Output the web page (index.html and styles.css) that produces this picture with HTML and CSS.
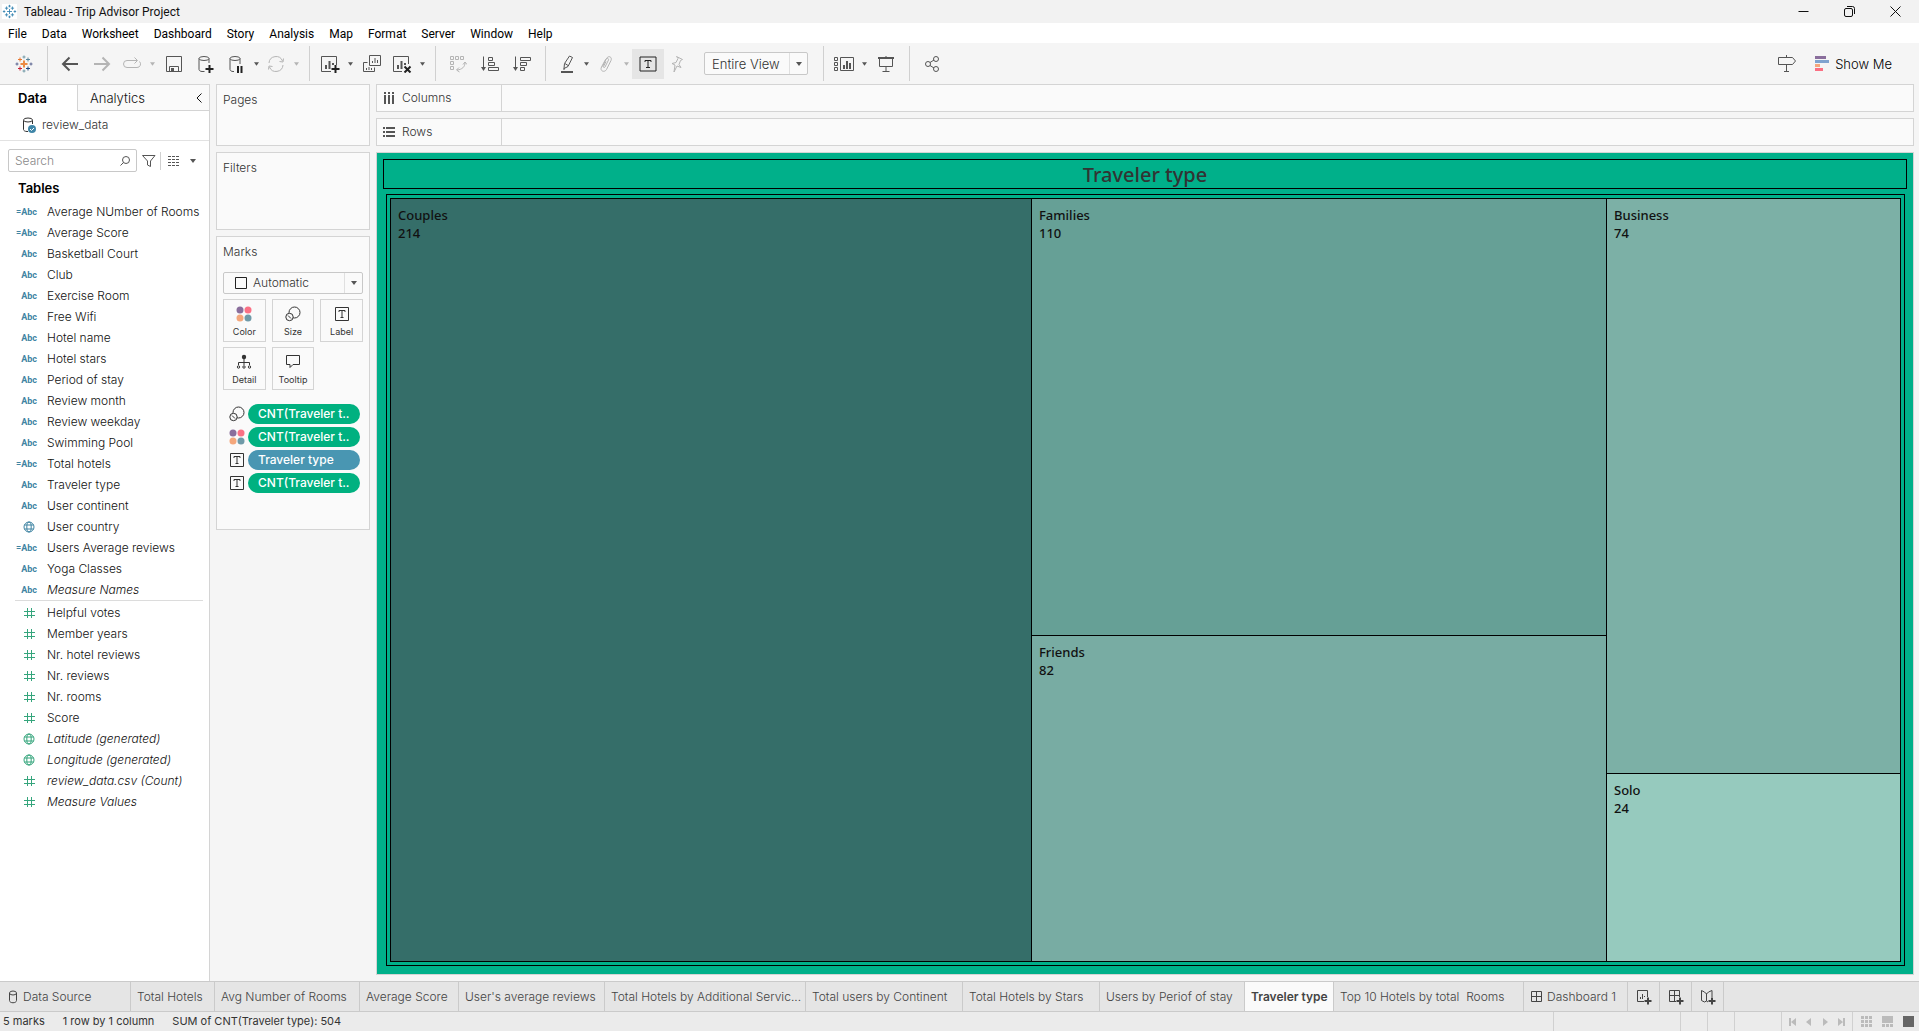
FILE: index.html
```html
<!DOCTYPE html>
<html lang="en">
<head>
<meta charset="utf-8">
<title>Tableau - Trip Advisor Project</title>
<link rel="stylesheet" href="styles.css">
</head>
<body>
<svg class="defs" aria-hidden="true">
  <symbol id="caret" viewBox="0 0 6 4"><path d="M0 0h6L3 4z"/></symbol>
  <symbol id="logo" viewBox="0 0 18 18">
    <path d="M9 5.500v7M5.500 9h7" class="l-orange"/>
    <path d="M5 2.500v4M3 4.500h4" class="l-red2"/>
    <path d="M13 2.500v4M11 4.500h4" class="l-teal"/>
    <path d="M5 11.500v4M3 13.500h4" class="l-red"/>
    <path d="M13 11.500v4M11 13.500h4" class="l-navy"/>
    <path d="M9 .5v3M7.500 2h3M9 14.500v3M7.500 16h3" class="l-blue"/>
    <path d="M2 7.500v3M.5 9h3M16 7.500v3M14.500 9h3" class="l-purple"/>
  </symbol>
  <symbol id="text-box" viewBox="0 0 16 16"><path d="M1.500 1.500h13v13h-13zM5 6V4.500h6V6M8 4.500v7M6.500 11.500h3"/></symbol>
  <symbol id="size" viewBox="0 0 16 16"><circle cx="9.500" cy="6.500" r="5.500"/><circle class="cover" cx="4.500" cy="11" r="3.700"/><path d="M3 9.500l3 3"/></symbol>
  <symbol id="dots" viewBox="0 0 16 16"><circle cx="4" cy="4" r="3.500" fill="#8a6e9c"/><circle cx="12" cy="4" r="3.500" fill="#fb7185"/><circle cx="4" cy="12" r="3.500" fill="#f4a77c"/><circle cx="12" cy="12" r="3.500" fill="#6f9aa8"/></symbol>
  <symbol id="globe" viewBox="0 0 12 12"><circle cx="6" cy="6" r="5"/><ellipse cx="6" cy="6" rx="2.200" ry="5"/><path d="M1.500 4h9M1.500 8h9"/></symbol>
  <symbol id="hash" viewBox="0 0 12 12"><path d="M4.500 1v10M8.500 1v10M1 4.500h11M1 8.500h11"/></symbol>
</svg>

<header class="titlebar">
  <svg class="app-icon" viewBox="0 0 18 18"><path d="M9 6v6M6 9h6M5.500 3v4M3.500 5h4M12.500 3v4M10.500 5h4M5.500 11v4M3.500 13h4M12.500 11v4M10.500 13h4M9 1v3M7.500 2.500h3M9 14v3M7.500 15.500h3M2.500 7.500v3M1 9h3M15.500 7.500v3M14 9h3"/></svg>
  <span class="app-title">Tableau - Trip Advisor Project</span>
  <div class="window-buttons">
    <button aria-label="Minimize"><svg viewBox="0 0 11 11"><path d="M.5 5.500h10"/></svg></button>
    <button aria-label="Restore"><svg viewBox="0 0 11 11"><rect x=".5" y="2.500" width="8" height="8" rx="1.500"/><path d="M3 .5h5.500a2 2 0 0 1 2 2V8"/></svg></button>
    <button aria-label="Close"><svg viewBox="0 0 11 11"><path d="M.5.5l10 10M10.500.5l-10 10"/></svg></button>
  </div>
</header>

<nav class="menubar">
  <button>File</button><button>Data</button><button>Worksheet</button><button>Dashboard</button><button>Story</button><button>Analysis</button><button>Map</button><button>Format</button><button>Server</button><button>Window</button><button>Help</button>
</nav>

<div class="toolbar">
  <div class="group">
    <button class="tool" aria-label="Start page"><svg class="logo" viewBox="0 0 18 18"><use href="#logo"/></svg></button>
  </div>
  <div class="group">
    <button class="tool" aria-label="Undo"><svg viewBox="0 0 18 18"><path class="bold" d="M1.500 9H17M8.500 2.500L2 9l6.500 6.500"/></svg></button>
    <button class="tool off" aria-label="Redo"><svg viewBox="0 0 18 18"><path class="bold" d="M1 9h15.500M9.500 2.500L16 9l-6.500 6.500"/></svg></button>
    <button class="tool split off" aria-label="Replay"><svg viewBox="0 0 18 18"><path d="M14 5.500H4a3.500 3.500 0 0 0 0 7h10a3.500 3.500 0 0 0 2.500-6M11.500 2.500l3 3-3 3"/></svg></button>
    <button class="arrow off" aria-label="Replay options"><svg class="caret"><use href="#caret"/></svg></button>
    <button class="tool" aria-label="Save"><svg viewBox="0 0 18 18"><path d="M1.500 1.500h15v15h-15zM4.500 16V11.500h9V16"/><path class="solid" d="M6 13h3v3.500H6z"/></svg></button>
    <button class="tool" aria-label="New data source"><svg viewBox="0 0 18 18"><path d="M7.500 16.500H5c-1.500 0-3-1-3-2v-11M12 8V3.500"/><ellipse cx="7" cy="3.500" rx="5" ry="2"/><path class="badge" d="M12.500 10v8M8.500 14h8"/></svg></button>
    <button class="tool split" aria-label="Pause updates"><svg viewBox="0 0 18 18"><path d="M7 16.500H6c-1.500 0-3-1-3-2v-11M13 9V3.500"/><ellipse cx="8" cy="3.500" rx="5" ry="2"/><path class="badge" d="M11 11v7M14.500 11v7"/></svg></button>
    <button class="arrow" aria-label="Pause options"><svg class="caret"><use href="#caret"/></svg></button>
    <button class="tool split off" aria-label="Refresh"><svg viewBox="0 0 18 18"><path d="M2 8a7 7 0 0 1 13.500-2M16 10a7 7 0 0 1-13.500 2M12.500 6.500l3.500.5.5-3.500M5.500 11.500L2 11l-.5 3.500"/></svg></button>
    <button class="arrow off" aria-label="Refresh options"><svg class="caret"><use href="#caret"/></svg></button>
  </div>
  <div class="group">
    <button class="tool split" aria-label="New worksheet"><svg class="wide" viewBox="0 0 20 18"><path d="M11 16.500H1.500v-15h15V10"/><path class="thick" d="M6 14v-4M9.500 14V6M13 10V8"/><path class="badge" d="M15.500 10v8M11.500 14h8"/></svg></button>
    <button class="arrow" aria-label="New sheet options"><svg class="caret"><use href="#caret"/></svg></button>
    <button class="tool" aria-label="Duplicate"><svg viewBox="0 0 18 18"><path d="M6.500.5h11v10h-11zM4.500 7.500h-4v9h11v-4M9.500 8V6M12 8V3M14.500 8V5M3.500 15v-2M6 15v-3M8.500 15v-2"/></svg></button>
    <button class="tool split" aria-label="Clear sheet"><svg class="wide" viewBox="0 0 20 18"><path d="M10 16.500H1.500v-15h15V9"/><path class="thick" d="M6 14v-4M9.500 14V6M13 10V8"/><path class="badge" d="M12.500 11.500l6 6M18.500 11.500l-6 6"/></svg></button>
    <button class="arrow" aria-label="Clear options"><svg class="caret"><use href="#caret"/></svg></button>
  </div>
  <div class="group">
    <button class="tool off" aria-label="Swap rows and columns"><svg viewBox="0 0 18 18"><path d="M1.500 1.500h3v3h-3zM6.500 1.500h3v3h-3zM11.500 1.500h3v3h-3zM1.500 6.500h3v3h-3zM1.500 11.500h3v3h-3zM16 7.500c0 4.500-3 7-8 7.500M14 9.500l2-2.500 2 2.500M10 12.500L7.500 15l3 2"/></svg></button>
    <button class="tool" aria-label="Sort ascending"><svg viewBox="0 0 18 18"><path d="M2.500 1.500v13M7.500 2.500h4v3h-4zM7.500 7.500h6v3h-6zM7.500 12.500h10v3h-10z"/><path class="solid" d="M0 12h5l-2.500 4z"/></svg></button>
    <button class="tool" aria-label="Sort descending"><svg viewBox="0 0 18 18"><path d="M2.500 1.500v13M7.500 2.500h10v3h-10zM7.500 7.500h6v3h-6zM7.500 12.500h4v3h-4z"/><path class="solid" d="M0 12h5l-2.500 4z"/></svg></button>
  </div>
  <div class="group">
    <button class="tool split" aria-label="Highlight"><svg viewBox="0 0 18 18"><path d="M12.500 1l3 1.500-4.500 9-4 2 .5-5zM8 8.500l3 2M6 14h2"/><path class="thick" d="M4 17h12"/></svg></button>
    <button class="arrow" aria-label="Highlight options"><svg class="caret"><use href="#caret"/></svg></button>
    <button class="tool split off" aria-label="Group members"><svg viewBox="0 0 18 18"><path d="M5.500 11.500l4-8c2-3.500 6-1.500 4.500 2l-4.500 9c-2 3.500-7 1.500-5-2.500l4-7.500c1.500-2 3.500-1 3 .5l-3.500 7c-.5 1-2 .5-1.500-.5l2.500-5"/></svg></button>
    <button class="arrow off" aria-label="Group options"><svg class="caret"><use href="#caret"/></svg></button>
    <button class="tool pressed" aria-label="Show mark labels" aria-pressed="true"><svg viewBox="0 0 18 18"><path d="M1 2h16v14H1zM6 7V5.500h6V7M9 5.500v7M7 12.500h4"/></svg></button>
    <button class="tool split off" aria-label="Fix axes"><svg viewBox="0 0 18 18"><path d="M7.500 1.500l6 3-2 1-1.500 4 2 3-4-1.500-3 6 1-7-3-1.500 4-1 2-4z"/></svg></button>
    <div class="picker fit">
      <select aria-label="Fit"><option>Entire View</option></select>
      <span class="picker-arrow"><svg class="caret"><use href="#caret"/></svg></span>
    </div>
  </div>
  <div class="group">
    <button class="tool split" aria-label="Show cards"><svg class="wide" viewBox="0 0 20 18"><path d="M.5 2.500h3v3h-3zM.5 7.500h3v3h-3zM.5 12.500h3v3h-3zM6.500 2.500h13v13h-13z"/><path class="thick" d="M10 14v-4M13 14V6M16 14V8"/></svg></button>
    <button class="arrow" aria-label="Card options"><svg class="caret"><use href="#caret"/></svg></button>
    <button class="tool" aria-label="Presentation mode"><svg viewBox="0 0 18 18"><path class="thick" d="M1 3h16"/><path d="M2.500 3v8.500h13V3M9 1v2M9 11.500v5M5.500 16.500h7"/></svg></button>
  </div>
  <div class="group last">
    <button class="tool" aria-label="Share"><svg viewBox="0 0 18 18"><circle cx="5" cy="9" r="2.500"/><circle cx="13" cy="4" r="2.500"/><circle cx="13" cy="14" r="2.500"/><path d="M7 7.500l4-2.500M7 10.500l4 2.500"/></svg></button>
  </div>
  <div class="right-tools">
    <button class="tool" aria-label="Guide"><svg viewBox="0 0 18 18"><path d="M.5 2.500h14l3 3.500-3 3.500H.5zM8.500 0v2.500M8.500 9.500v7M6 16.500h5"/></svg></button>
    <button class="show-me"><svg viewBox="0 0 14 16"><path fill="#8a6e9c" d="M0 0h11v3H0z"/><path fill="#7fa3cf" d="M0 4h14v3H0z"/><path fill="#f4a77c" d="M0 8h5v3H0z"/><path fill="#fb6f82" d="M0 12h8v3H0z"/></svg>Show Me</button>
  </div>
</div>

<div class="workspace">
  <aside class="data-pane">
    <div class="pane-tabs">
      <button class="pane-tab current">Data</button>
      <button class="pane-tab">Analytics<svg viewBox="0 0 6 10"><path d="M5.500.5L1 5l4.500 4.500"/></svg></button>
    </div>
    <div class="source"><svg viewBox="0 0 14 16"><path d="M6 14.500H5c-2 0-3.500-1-3.500-2v-9M10.500 7V3.500"/><ellipse cx="6" cy="3" rx="4.500" ry="2"/><circle cx="10" cy="12" r="4" fill="#3f86a8" stroke="none"/><path d="M8 12l1.500 1.500L12 11" stroke="#fff"/></svg>review_data</div>
    <div class="search-row">
      <div class="search"><input type="text" placeholder="Search" aria-label="Search"><svg viewBox="0 0 10 10"><circle cx="6" cy="4" r="3.500"/><path d="M3.500 6.500L.5 9.500"/></svg></div>
      <button class="filter" aria-label="Filter fields"><svg viewBox="0 0 14 14"><path d="M.5 1.500h12.500L8.500 7v5.500l-3-1.500V7z"/></svg></button>
      <button class="view-as" aria-label="View as"><svg viewBox="0 0 12 10"><path class="dash" d="M0 .5h12M0 3.500h12M0 6.500h12M0 9.500h12"/></svg><svg class="caret"><use href="#caret"/></svg></button>
    </div>
    <h2>Tables</h2>
    <ul class="fields dims">
      <li><span class="abc">=Abc</span>Average NUmber of Rooms</li>
      <li><span class="abc">=Abc</span>Average Score</li>
      <li><span class="abc">Abc</span>Basketball Court</li>
      <li><span class="abc">Abc</span>Club</li>
      <li><span class="abc">Abc</span>Exercise Room</li>
      <li><span class="abc">Abc</span>Free Wifi</li>
      <li><span class="abc">Abc</span>Hotel name</li>
      <li><span class="abc">Abc</span>Hotel stars</li>
      <li><span class="abc">Abc</span>Period of stay</li>
      <li><span class="abc">Abc</span>Review month</li>
      <li><span class="abc">Abc</span>Review weekday</li>
      <li><span class="abc">Abc</span>Swimming Pool</li>
      <li><span class="abc">=Abc</span>Total hotels</li>
      <li><span class="abc">Abc</span>Traveler type</li>
      <li><span class="abc">Abc</span>User continent</li>
      <li><svg viewBox="0 0 12 12"><use href="#globe"/></svg>User country</li>
      <li><span class="abc">=Abc</span>Users Average reviews</li>
      <li><span class="abc">Abc</span>Yoga Classes</li>
      <li><span class="abc">Abc</span><em>Measure Names</em></li>
    </ul>
    <ul class="fields measures">
      <li><svg viewBox="0 0 12 12"><use href="#hash"/></svg>Helpful votes</li>
      <li><svg viewBox="0 0 12 12"><use href="#hash"/></svg>Member years</li>
      <li><svg viewBox="0 0 12 12"><use href="#hash"/></svg>Nr. hotel reviews</li>
      <li><svg viewBox="0 0 12 12"><use href="#hash"/></svg>Nr. reviews</li>
      <li><svg viewBox="0 0 12 12"><use href="#hash"/></svg>Nr. rooms</li>
      <li><svg viewBox="0 0 12 12"><use href="#hash"/></svg>Score</li>
      <li><svg viewBox="0 0 12 12"><use href="#globe"/></svg><em>Latitude (generated)</em></li>
      <li><svg viewBox="0 0 12 12"><use href="#globe"/></svg><em>Longitude (generated)</em></li>
      <li><svg viewBox="0 0 12 12"><use href="#hash"/></svg><em>review_data.csv (Count)</em></li>
      <li><svg viewBox="0 0 12 12"><use href="#hash"/></svg><em>Measure Values</em></li>
    </ul>
  </aside>

  <section class="cards">
    <div class="card pages"><h3>Pages</h3></div>
    <div class="card filters"><h3>Filters</h3></div>
    <div class="card marks">
      <h3>Marks</h3>
      <div class="picker mark-type">
        <svg class="square" viewBox="0 0 12 12"><path d="M.5.5h11v11H.5z"/></svg>
        <select aria-label="Mark type"><option>Automatic</option></select>
        <span class="picker-arrow"><svg class="caret"><use href="#caret"/></svg></span>
      </div>
      <div class="mark-buttons">
        <button><svg viewBox="0 0 16 16"><use href="#dots"/></svg>Color</button>
        <button><svg viewBox="0 0 16 16"><use href="#size"/></svg>Size</button>
        <button><svg viewBox="0 0 16 16"><use href="#text-box"/></svg>Label</button>
        <button><svg viewBox="0 0 16 16"><circle cx="8" cy="3" r="2.200" class="ink"/><path d="M8 4v7M2.500 11V8.500h11V11"/><circle cx="2.500" cy="13" r="1.200"/><circle cx="8" cy="13" r="1.200"/><circle cx="13.500" cy="13" r="1.200"/></svg>Detail</button>
        <button><svg viewBox="0 0 16 16"><path d="M1.500 1.500h13v9H8l-3 3v-3H1.500z"/></svg>Tooltip</button>
      </div>
      <ul class="pills">
        <li><svg viewBox="0 0 16 16"><use href="#size"/></svg><button class="pill">CNT(Traveler t..</button></li>
        <li><svg viewBox="0 0 16 16"><use href="#dots"/></svg><button class="pill">CNT(Traveler t..</button></li>
        <li><svg viewBox="0 0 16 16"><use href="#text-box"/></svg><button class="pill blue">Traveler type</button></li>
        <li><svg viewBox="0 0 16 16"><use href="#text-box"/></svg><button class="pill">CNT(Traveler t..</button></li>
      </ul>
    </div>
  </section>

  <main>
    <div class="shelf"><span class="shelf-name"><svg viewBox="0 0 12 12"><path d="M2 0v2M2 3v9M6 0v2M6 3v9M10 0v2M10 3v9"/></svg>Columns</span></div>
    <div class="shelf"><span class="shelf-name"><svg viewBox="0 0 12 12"><path d="M0 2h2M3 2h9M0 6h2M3 6h9M0 10h2M3 10h9"/></svg>Rows</span></div>
    <div class="viz">
      <h1>Traveler type</h1>
      <div class="frame">
        <div class="treemap">
          <div class="cell couples">Couples<br>214</div>
          <div class="cell families">Families<br>110</div>
          <div class="cell friends">Friends<br>82</div>
          <div class="cell business">Business<br>74</div>
          <div class="cell solo">Solo<br>24</div>
        </div>
      </div>
    </div>
  </main>
</div>

<nav class="sheets">
  <button><svg viewBox="0 0 14 14"><path d="M3.500 3v7.500c0 3 7 3 7 0V3"/><ellipse cx="7" cy="3" rx="3.500" ry="2"/></svg>Data Source</button>
  <button>Total Hotels</button>
  <button>Avg Number of Rooms</button>
  <button>Average Score</button>
  <button>User's average reviews</button>
  <button>Total Hotels by Additional Servic...</button>
  <button>Total users by Continent</button>
  <button>Total Hotels by Stars</button>
  <button>Users by Periof of stay</button>
  <button class="current">Traveler type</button>
  <button>Top 10 Hotels by total&nbsp; Rooms</button>
  <button><svg viewBox="0 0 14 14"><path d="M1.500 1.500h10v10h-10zM6.500 1.500v10M1.500 6.500h10"/></svg>Dashboard 1</button>
  <button class="add" aria-label="New worksheet"><svg viewBox="0 0 16 16"><path d="M8 12.500H1.500v-11h10V8M4.500 10V8M6.500 10V5M8.500 8V7"/><path class="thick" d="M12 8.500v7M8.500 12h7"/></svg></button>
  <button class="add" aria-label="New dashboard"><svg viewBox="0 0 16 16"><path d="M8 12.500H1.500v-11h10V8M6.500 1.500v11M1.500 6.500h10"/><path class="thick" d="M12 8.500v7M8.500 12h7"/></svg></button>
  <button class="add" aria-label="New story"><svg viewBox="0 0 16 16"><path d="M8 13l-1.500-1-2 1-3-1.500v-10l3 1.500 2 2 2-2 3.500-1.500V8M6.500 4.500V12"/><path class="thick" d="M12 8.500v7M8.500 12h7"/></svg></button>
</nav>

<footer>
  <span>5 marks</span><span>1 row by 1 column</span><span>SUM of CNT(Traveler type): 504</span>
  <div class="slots">
    <i></i><i></i><i></i><i></i>
    <div class="pager">
      <button aria-label="First"><svg viewBox="0 0 8 8"><path d="M0 0h2v8H0zM7 0v8L2 4z"/></svg></button>
      <button aria-label="Previous"><svg viewBox="0 0 8 8"><path d="M6 0v8L1 4z"/></svg></button>
      <button aria-label="Next"><svg viewBox="0 0 8 8"><path d="M2 0v8l5-4z"/></svg></button>
      <button aria-label="Last"><svg viewBox="0 0 8 8"><path d="M6 0h2v8H6zM1 0v8l5-4z"/></svg></button>
    </div>
    <div class="views">
      <button aria-label="Sheet sorter"><svg viewBox="0 0 12 12"><path d="M0 0h3v3H0zM4 0h3v3H4zM8 0h3v3H8zM0 4h3v3H0zM4 4h3v3H4zM8 4h3v3H8zM0 8h3v3H0zM4 8h3v3H4zM8 8h3v3H8z"/></svg></button>
      <button aria-label="Filmstrip"><svg viewBox="0 0 12 12"><path d="M0 0h11v7H0zM0 8h3v3H0zM4 8h3v3H4zM8 8h3v3H8z"/></svg></button>
      <button class="current" aria-label="Tabs"><svg viewBox="0 0 12 12"><path d="M0 0h11v11H0z"/></svg></button>
    </div>
  </div>
</footer>
</body>
</html>
```
FILE: styles.css
```css
* { box-sizing: border-box; }

:root {
  --line: #d4d4d4;
  --panel: #fafafa;
  --ink: #111;
  --muted: #333;
  --icon: #555;
}

body {
  margin: 0;
  min-height: 100vh;
  display: flex;
  flex-direction: column;
  background: #f5f5f5;
  color: var(--ink);
  font: 300 12px/20px Inter, "Liberation Sans", sans-serif;
}

h1, h2, h3, ul { margin: 0; padding: 0; }
ul { list-style: none; }
button, select, input { font: inherit; color: inherit; border: 0; padding: 0; background: none; }
svg { fill: none; stroke: currentColor; flex: none; display: block; }
.defs { position: absolute; width: 0; height: 0; }
.caret { width: 6px; height: 4px; fill: currentColor; stroke: none; }
.thick { stroke-width: 2; }
.solid, .ink { fill: currentColor; stroke: none; }

/* title bar */
.titlebar { display: flex; align-items: center; height: 23px; background: #f2f2f2; color: #111; font-family: Roboto, sans-serif; font-weight: 400; }
.app-icon { width: 15px; height: 15px; margin: 0 7px 0 2px; background: #fff; color: #2f7fae; }
.window-buttons { display: flex; margin-left: auto; padding-right: 1px; }
.window-buttons button { width: 46px; height: 20px; display: grid; place-items: center; }
.window-buttons svg { width: 11px; height: 11px; }

/* menu */
.menubar { display: flex; align-items: center; gap: 15px; height: 20px; padding: 2px 0 0 8px; background: #fff; color: #000; font-family: Roboto, sans-serif; font-weight: 400; }

/* toolbar */
.toolbar { display: flex; height: 41px; padding: 3px 8px; color: var(--icon); }
.group { display: flex; align-items: center; padding: 0 7px 0 6px; border-right: 1px solid #d0d0d0; }
.group:first-child { padding-left: 0; }
.group.last { border: 0; }
.tool { width: 32px; height: 30px; display: grid; place-items: center; }
.tool.split { width: 28px; }
.tool svg { width: 18px; height: 18px; }
.tool .wide { width: 20px; }
.arrow { width: 12px; height: 30px; display: grid; place-items: center; }
.arrow .caret { width: 5px; }
.off { color: #b4b4b4; }
.bold { stroke-width: 2; }
.badge { stroke: #222; stroke-width: 2; }
.pressed { background: #e5e5e5; color: #222; }
.l-orange { stroke: #eb8a44; stroke-width: 2; }
.l-red { stroke: #c72035; }
.l-red2 { stroke: #e8762d; }
.l-teal { stroke: #5b879b; }
.l-navy { stroke: #1f457e; }
.l-blue { stroke: #7199a6; }
.l-purple { stroke: #5b6591; }
.picker { position: relative; display: flex; align-items: center; border: 1px solid #c8c8c8; border-radius: 2px; color: var(--muted); background: var(--panel); }
.picker select { appearance: none; flex: 1; min-width: 0; height: 100%; }
.picker-arrow { position: absolute; right: 0; top: 0; bottom: 0; width: 18px; border-left: 1px solid #e0e0e0; color: var(--icon); display: grid; place-items: center; pointer-events: none; }
.fit { width: 104px; height: 23px; margin: 0 8px 0 12px; font-size: 13px; }
.fit select { padding-left: 7px; }
.right-tools { display: flex; align-items: center; margin-left: auto; padding-right: 19px; gap: 12px; }
.show-me { display: flex; align-items: center; gap: 6px; font-size: 13px; color: #000; }
.show-me svg { width: 14px; height: 16px; stroke: none; }

/* workspace */
.workspace { flex: 1; display: flex; gap: 6px; padding-right: 5px; }
.data-pane { width: 210px; background: #fff; border-right: 1px solid var(--line); }
.pane-tabs { display: flex; height: 27px; font-size: 13px; }
.pane-tab { flex: 1; display: flex; align-items: center; justify-content: space-between; padding: 0 7px 0 12px; border: 1px solid var(--line); border-width: 1px 0 1px 1px; background: var(--panel); }
.pane-tab svg { width: 6px; height: 10px; }
.pane-tab.current { flex: none; width: 77px; padding-left: 18px; border-width: 1px 0 0; background: #fff; color: #000; font-weight: 600; }
.source { display: flex; align-items: center; gap: 6px; height: 30px; padding: 0 0 2px 22px; border-bottom: 1px solid #e2e2e2; color: var(--muted); }
.source svg { width: 14px; height: 16px; }
.search-row { display: flex; align-items: center; height: 23px; margin: 8px 0 6px 8px; color: var(--icon); }
.search { display: flex; align-items: center; width: 129px; height: 23px; padding: 0 6px; border: 1px solid #c8c8c8; border-radius: 2px; }
.search input { flex: 1; min-width: 0; }
.search input::placeholder { color: #888; }
.search svg { width: 10px; height: 10px; }
.filter { width: 24px; padding-left: 5px; border-right: 1px solid #d0d0d0; height: 18px; }
.filter svg { width: 14px; height: 14px; }
.view-as { display: flex; align-items: center; gap: 10px; padding-left: 7px; }
.view-as svg:first-child { width: 12px; height: 10px; }
.dash { stroke-dasharray: 3 1; }
h2 { padding: 0 0 3px 18px; font-size: 13px; line-height: 20px; font-weight: 600; color: #000; }
.fields li { display: flex; align-items: center; height: 21px; padding-right: 4px; white-space: nowrap; }
.fields svg { width: 12px; height: 12px; margin: 0 12px 0 23px; }
.abc { width: 37px; margin-right: 10px; text-align: right; font-family: Roboto, sans-serif; font-size: 9px; font-weight: 700; }
.dims .abc, .dims svg { color: #3f84a3; }
.dims::after { content: ""; display: block; height: 1px; margin: 0 6px 0 15px; background: #dcdcdc; }
.measures { margin-top: 1px; }
.measures svg { color: #35a57c; }

/* cards */
.cards { width: 154px; display: flex; flex-direction: column; gap: 6px; }
.card { padding: 5px 6px; background: var(--panel); border: 1px solid var(--line); color: var(--muted); }
h3 { font-size: 12px; line-height: 20px; font-weight: 300; }
.pages { height: 62px; }
.filters { height: 78px; }
.marks { height: 294px; }
.mark-type { height: 22px; margin-top: 10px; }
.mark-type select { padding-left: 6px; }
.square { width: 12px; height: 12px; margin-left: 11px; color: #222; }
.mark-buttons { display: grid; grid-template-columns: repeat(3, 1fr); gap: 5px 6px; margin-top: 5px; }
.mark-buttons button { display: flex; flex-direction: column; align-items: center; gap: 3px; height: 43px; padding-top: 6px; border: 1px solid var(--line); font-size: 9px; line-height: 14px; font-weight: 400; }
.mark-buttons svg, .pills svg { width: 16px; height: 16px; color: #333; }
.cover { fill: var(--panel); }
#dots circle { stroke: none; }
.pills { margin-top: 14px; display: grid; gap: 3px; }
.pills li { display: flex; align-items: center; gap: 3px; padding: 0 4px 0 6px; }
.pill { flex: 1; height: 20px; padding: 0 10px; border-radius: 10px; background: #00b180; color: #fff; text-align: left; font-weight: 500; white-space: nowrap; }
.pill.blue { background: #4996b2; }

/* view */
main { flex: 1; min-width: 0; display: flex; flex-direction: column; gap: 6px; padding-bottom: 6px; }
.shelf { height: 28px; display: flex; background: var(--panel); border: 1px solid var(--line); }
.shelf-name { width: 125px; display: flex; align-items: center; gap: 7px; padding-left: 6px; border-right: 1px solid var(--line); color: var(--muted); }
.shelf svg { width: 12px; height: 12px; color: var(--icon); stroke-width: 2; }
.viz { flex: 1; display: flex; flex-direction: column; padding: 6px 6px 8px; background: #00b08a; border: 1px solid var(--line); font-family: "Noto Sans", sans-serif; }
h1 { height: 30px; border: 1px solid #000; text-align: center; font-size: 20px; line-height: 30px; font-weight: 500; color: #333; }
.frame { flex: 1; display: flex; margin: 5px 2px 0 3px; padding: 3px; border: 1px solid #000; }
.treemap { flex: 1; display: grid; grid-template-columns: 640fr 574fr 293fr; grid-template-rows: 436fr 137fr 187fr; gap: 1px; background: #000; border: 1px solid #000; }
.cell { padding: 7px; font-size: 13px; line-height: 18px; font-weight: 500; color: #111; }
.couples { grid-area: 1 / 1 / 4 / 2; background: #356e69; }
.families { grid-area: 1 / 2; background: #66a096; }
.friends { grid-area: 2 / 2 / 4 / 3; background: #78aca3; }
.business { grid-area: 1 / 3 / 3 / 4; background: #7cb0a6; }
.solo { grid-area: 3 / 3; background: #96cabe; }

/* sheet tabs */
.sheets { display: grid; grid-template-columns: 131px 84px 145px 99px 146px 201px 157px 137px 145px 89px 190px 104px 32px 32px 32px; height: 31px; background: #e5e5e5; border: 1px solid #cacaca; border-width: 1px 0; color: #444; }
.sheets button { display: flex; align-items: center; gap: 3px; padding-left: 6px; border-right: 1px solid #cacaca; white-space: nowrap; min-width: 0; }
.sheets svg { width: 14px; height: 14px; }
.sheets .add svg { width: 16px; height: 16px; margin-left: 2px; }
.sheets .current { background: var(--panel); color: #444; font-weight: 600; }

/* status bar */
footer { display: flex; gap: 18px; height: 19px; padding-left: 3px; background: #ebebeb; line-height: 19px; font-size: 11px; font-weight: 400; color: #333; }
.slots { display: flex; margin-left: auto; color: #bbb; }
.slots i { width: 27px; border-left: 1px solid #d0d0d0; }
.slots i:first-child { width: 127px; }
.slots i:nth-child(4) { width: 47px; }
.pager, .views { display: flex; align-items: center; border-left: 1px solid #d0d0d0; }
.pager { width: 71px; padding-left: 7px; gap: 8px; }
.pager svg { width: 8px; height: 8px; fill: currentColor; stroke: none; }
.views { width: 67px; padding-left: 8px; gap: 9px; }
.views svg { width: 12px; height: 12px; fill: currentColor; stroke: none; }
.views .current { color: #666; }
```
